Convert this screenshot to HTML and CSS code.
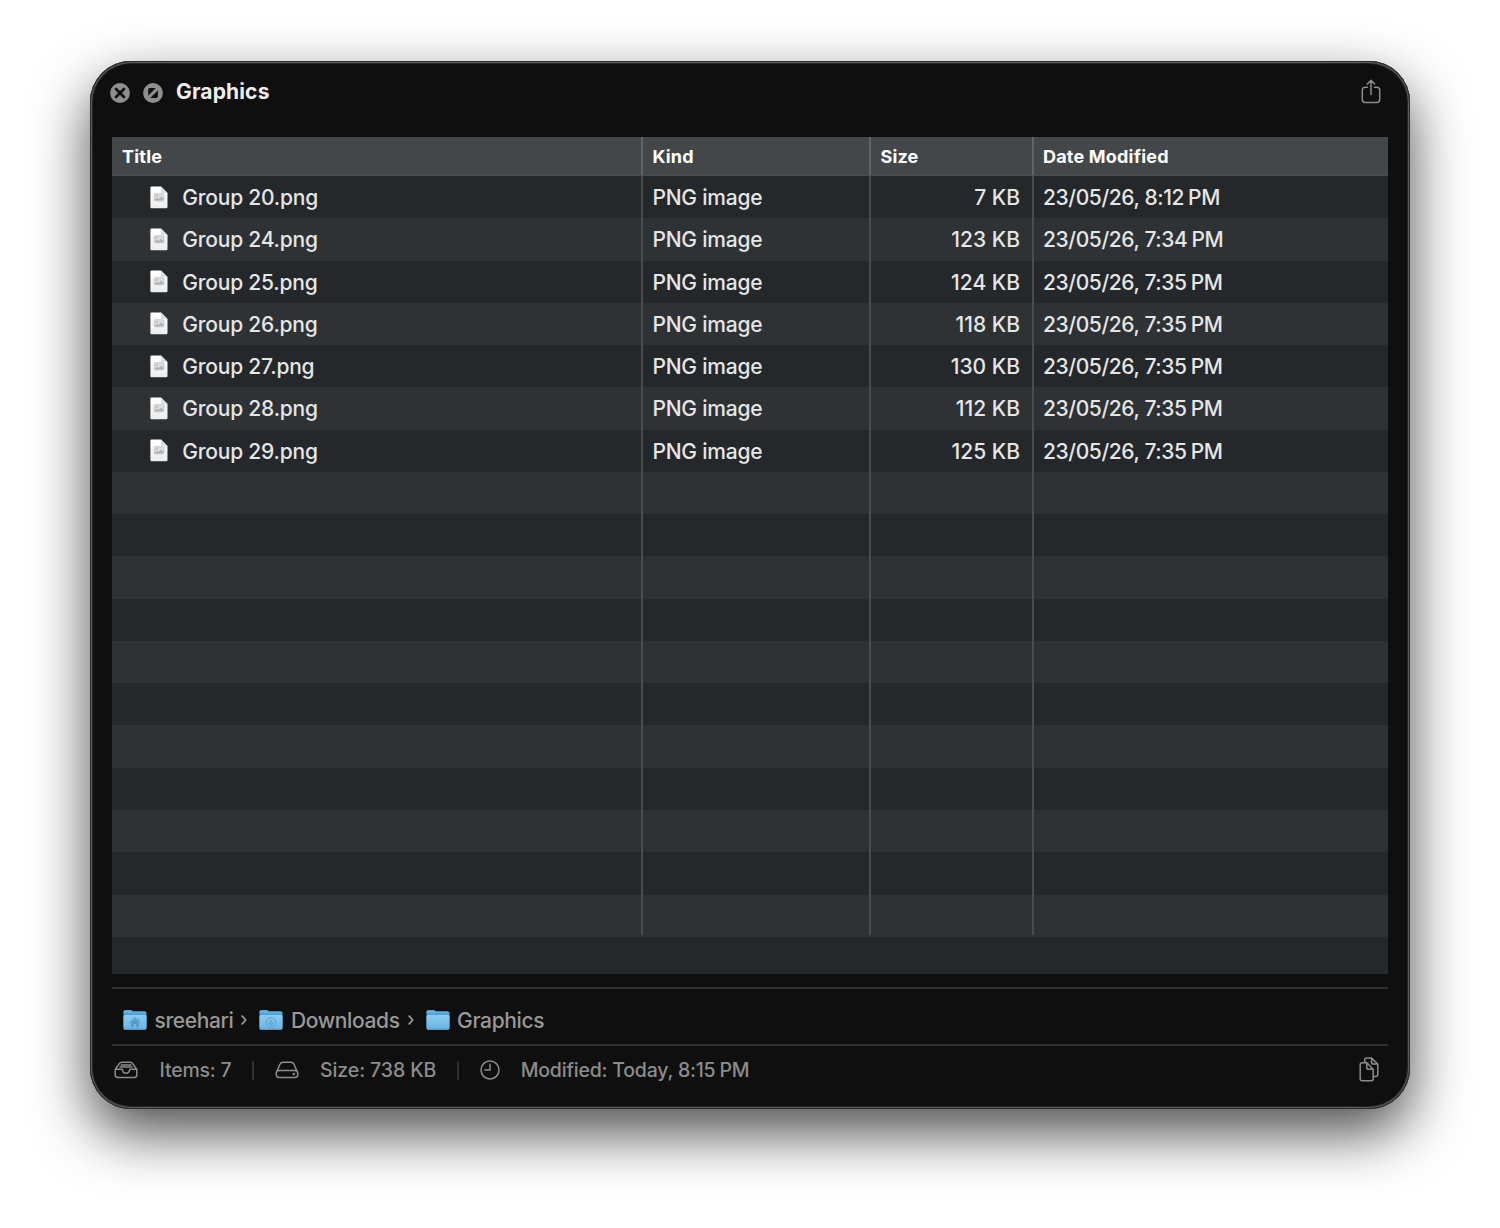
FILE: index.html
```html
<!DOCTYPE html>
<html lang="en">
<head>
<meta charset="utf-8">
<title>Graphics</title>
<link rel="stylesheet" href="styles.css">
</head>
<body>
<svg class="defs" width="0" height="0">
  <defs>
    <linearGradient id="folder-front" x1="0" y1="0" x2="0" y2="1"><stop offset="0" stop-color="#89cdf4"/><stop offset="1" stop-color="#69b2e3"/></linearGradient>
    <linearGradient id="paper" x1="0" y1="0" x2="0" y2="1"><stop offset="0" stop-color="#fff"/><stop offset="1" stop-color="#ececec"/></linearGradient>
    <symbol id="png" viewBox="0 0 18 23">
      <path d="M1.6 0.5H11l6.5 6.6v14q0 1.2-1.2 1.2H1.6Q.4 22.300.4 21.100V1.700Q.4.5 1.600.5z" fill="url(#paper)"/>
      <path d="M11 .5l6.500 6.600h-5q-1.500 0-1.500-1.500z" fill="#dcdcdc"/>
      <rect x="4.300" y="7.800" width="9.500" height="7" rx="1" fill="#dedede" stroke="#bbb" stroke-width=".8"/>
      <path d="M4.800 13.800l2.200-2 1.800 1.300 2.200-2.500 2.300 2.500v1.200H4.800z" fill="#b2b2b2"/>
      <circle cx="6.800" cy="10" r=".8" fill="#999"/>
    </symbol>
    <symbol id="folder" viewBox="0 0 24 20">
      <path d="M0.500 2Q.5.300 2.200.300h5.600q.8 0 1.500.6t1.500.6h11q1.700 0 1.700 1.700v14H.5z" fill="#4f9fd5"/>
      <path d="M.5 3.200V2Q.5.300 2.200.300h5.600q.8 0 1.500.6t1.500.6h11q1.700 0 1.700 1.700z" fill="#65b2e2"/>
      <rect x=".5" y="4.900" width="23" height="14.800" rx="1.500" fill="url(#folder-front)"/>
      <path d="M1.500 19.200h21" stroke="#559fd0" stroke-width=".8"/>
    </symbol>
  </defs>
</svg>
<main class="window">
  <header class="titlebar">
    <svg class="control" viewBox="0 0 20 20"><circle cx="10" cy="10" r="9.900" fill="#8f8f8f"/><path d="M6 6l8 8M14 6l-8 8" stroke="#101010" stroke-width="2.600" stroke-linecap="round"/></svg>
    <svg class="control second" viewBox="0 0 20 20"><circle cx="10" cy="10" r="9.900" fill="#8f8f8f"/><path d="M5.200 12.800V6.700q0-1.600 1.600-1.600h6zM14.900 7.200v6.100q0 1.600-1.600 1.600H7.200z" fill="#101010"/></svg>
    <h1>Graphics</h1>
    <svg class="share" viewBox="0 0 20 25"><path d="M6.500 8.200H4.300Q1.300 8.200 1.300 11.200v9.200q0 3 3 3h11.400q3 0 3-3v-9.200q0-3-3-3h-2.200M10 15.500V1.500M6.300 5L10 1.300 13.700 5"/></svg>
  </header>
  <section class="listing">
    <div class="row head"><div>Title</div><div>Kind</div><div>Size</div><div>Date Modified</div></div>
    <div class="row"><div class="name"><svg class="file"><use href="#png"/></svg>Group 20.png</div><div>PNG image</div><div class="size">7 KB</div><div class="date">23/05/26, 8:12<span class="ap">PM</span></div></div>
    <div class="row"><div class="name"><svg class="file"><use href="#png"/></svg>Group 24.png</div><div>PNG image</div><div class="size">123 KB</div><div class="date">23/05/26, 7:34<span class="ap">PM</span></div></div>
    <div class="row"><div class="name"><svg class="file"><use href="#png"/></svg>Group 25.png</div><div>PNG image</div><div class="size">124 KB</div><div class="date">23/05/26, 7:35<span class="ap">PM</span></div></div>
    <div class="row"><div class="name"><svg class="file"><use href="#png"/></svg>Group 26.png</div><div>PNG image</div><div class="size">118 KB</div><div class="date">23/05/26, 7:35<span class="ap">PM</span></div></div>
    <div class="row"><div class="name"><svg class="file"><use href="#png"/></svg>Group 27.png</div><div>PNG image</div><div class="size">130 KB</div><div class="date">23/05/26, 7:35<span class="ap">PM</span></div></div>
    <div class="row"><div class="name"><svg class="file"><use href="#png"/></svg>Group 28.png</div><div>PNG image</div><div class="size">112 KB</div><div class="date">23/05/26, 7:35<span class="ap">PM</span></div></div>
    <div class="row"><div class="name"><svg class="file"><use href="#png"/></svg>Group 29.png</div><div>PNG image</div><div class="size">125 KB</div><div class="date">23/05/26, 7:35<span class="ap">PM</span></div></div>
    <div class="row"><div></div><div></div><div></div><div></div></div>
    <div class="row"><div></div><div></div><div></div><div></div></div>
    <div class="row"><div></div><div></div><div></div><div></div></div>
    <div class="row"><div></div><div></div><div></div><div></div></div>
    <div class="row"><div></div><div></div><div></div><div></div></div>
    <div class="row"><div></div><div></div><div></div><div></div></div>
    <div class="row"><div></div><div></div><div></div><div></div></div>
    <div class="row"><div></div><div></div><div></div><div></div></div>
    <div class="row"><div></div><div></div><div></div><div></div></div>
    <div class="row"><div></div><div></div><div></div><div></div></div>
    <div class="row"><div></div><div></div><div></div><div></div></div>
  </section>
  <nav class="path">
    <svg class="folder" viewBox="0 0 24 20"><use href="#folder"/><path d="M6.700 12.800L12 8l5.300 4.800M15.500 10.500v-2" fill="none" stroke="#539cc9" stroke-width="1.100"/><path d="M8.200 12.500L12 9.200l3.800 3.300v4.800h-2.600v-3h-2.400v3H8.200z" fill="#539cc9"/></svg>
    <span class="crumb">sreehari</span>
    <svg class="chevron" viewBox="0 0 6 10"><path d="M1.200 1.200L4.700 5 1.200 8.800"/></svg>
    <svg class="folder" viewBox="0 0 24 20"><use href="#folder"/><path d="M12 9.700v5M10 12.900l2 2 2-2" fill="none" stroke="#539cc9"/><circle cx="12" cy="12.400" r="4.700" fill="none" stroke="#539cc9" stroke-width=".9"/></svg>
    <span class="crumb">Downloads</span>
    <svg class="chevron" viewBox="0 0 6 10"><path d="M1.200 1.200L4.700 5 1.200 8.800"/></svg>
    <svg class="folder" viewBox="0 0 24 20"><use href="#folder"/></svg>
    <span class="crumb">Graphics</span>
  </nav>
  <footer class="status">
    <svg class="glyph" viewBox="0 0 24 18"><path d="M1.200 8.500L5.300 2.600Q6.200 1.200 7.800 1.200h8.400q1.600 0 2.500 1.400l4.100 5.900v5.500q0 2.500-2.500 2.500H3.700q-2.500 0-2.500-2.500zM1.500 8.300h6.200q.8 0 .8.900Q8.800 12.200 12 12.200t3.500-3q0-.9.800-.9h6.200M7.200 3.900h9.600M6 6.100h12"/></svg>
    <span class="items">Items: 7</span><i class="sep"></i>
    <svg class="glyph" viewBox="0 0 24 18"><path d="M1.400 11.500L5 3.200Q5.900 1.200 7.900 1.200h8.200q2 0 2.900 2l3.600 8.300M4.200 9.500h15.600q3 0 3 3v1q0 3-3 3H4.200q-3 0-3-3v-1q0-3 3-3z"/><circle cx="18.800" cy="13" r="1.200" fill="#8c8c8c" stroke="none"/></svg>
    <span class="total">Size: 738 KB</span><i class="sep"></i>
    <svg class="clock" viewBox="0 0 20 20"><circle cx="10" cy="10" r="9"/><path d="M10 4.300V10H4.700"/></svg>
    <span class="modified">Modified: Today, 8:15<span class="ap">PM</span></span>
    <svg class="copy" viewBox="0 0 20 25"><path d="M5.700 5V3.300Q5.700 1.100 7.900 1.100h4.700l6.200 6.200v10.100q0 2-2 2h-1.700M12.600 1.100v4.100q0 1.900 1.900 1.900h4.200M3.200 5.800h4.600l6.400 6.400v9.500q0 2-2 2h-9q-2 0-2-2V7.800q0-2 2-2zM7.800 5.800v4.600q0 1.900 1.900 1.900h4.500"/></svg>
  </footer>
</main>
</body>
</html>
```
FILE: styles.css
```css
* { box-sizing: border-box; }
body {
  margin: 0; width: 1500px; height: 1228px; padding: 61px 90px; overflow: hidden;
  background: #fff; font: 450 21px/1 Inter, "Liberation Sans", sans-serif;
  font-variant-ligatures: none;
}
.defs { display: block; height: 0; }
svg { display: block; flex: none; }
.window {
  width: 1320px; height: 1048px; padding: 0 22px; border-radius: 41px;
  background: #0f0f0f; color: #e5e6e6; display: flex; flex-direction: column;
  box-shadow: inset 0 0 0 1px #2a2b2b, inset 0 0 0 2px #5b5d5d, inset 0 0 0 3px #242424,
    0 24px 57px rgba(0,0,0,.7);
}
.titlebar { height: 76px; padding: 18px 7px 0 0; display: flex; align-items: flex-start; }
.control { width: 20px; height: 20px; margin: 4px 0 0 -2px; }
.second { margin-left: 13px; }
h1 { margin: 0 auto 0 13px; font-size: 21px; line-height: 25px; font-weight: 700; letter-spacing: .15px; color: #eee; }
.share { width: 20px; height: 25px; }
.share, .glyph, .clock, .copy { fill: none; stroke: #8c8c8c; stroke-width: 1.500; stroke-linecap: round; stroke-linejoin: round; }
.listing { height: 837px; background: #24282b; }
.row { height: 42.280px; display: grid; grid-template-columns: 531px 228px 163px 354px; color: #e5e6e6; letter-spacing: -.21px; }
.row:nth-child(odd) { background: #2e3235; }
.row > div { display: flex; align-items: center; padding: 1px 0 0 9.400px; white-space: pre; border-right: 2px solid #4a4d50; }
.row > div:first-child { padding-left: 10px; }
.row > div:last-child { border: 0; padding-left: 9px; }
.row:last-child > div { margin-bottom: 2px; }
.row.head { height: 39px; background: #434749; font-size: 18px; font-weight: 700; letter-spacing: .2px; color: #fff; border-bottom: 1px solid #4b4f51; }
.row.head > div { border-color: #616466; padding-top: 1px; }
.row .name:first-child { padding-left: 38.300px; }
.file { width: 18px; height: 23px; margin: -1px 14px 0 0; }
.row .size { justify-content: flex-end; padding-right: 12px; letter-spacing: 0; }
.row .date { letter-spacing: -.4px; }
.ap { margin-left: 4px; }
.path { height: 59px; margin-top: 13px; padding: 7px 0 0 11px; border: solid #303030; border-width: 2px 0; display: flex; align-items: center; color: #999; letter-spacing: -.37px; }
.folder { width: 24px; height: 20px; margin-right: 7.500px; }
.chevron { width: 6px; height: 10px; margin: 0 12px 0 8px; fill: none; stroke: #999; stroke-width: 1.800; stroke-linecap: round; stroke-linejoin: round; }
.status { height: 48px; padding: 0 9px 0 2px; display: flex; align-items: center; color: #8c8c8c; font-size: 19.500px; letter-spacing: -.2px; }
.status > span { padding-top: 1px; }
.glyph { width: 24px; height: 18px; }
.items { margin-left: 21.500px; }
.sep { width: 2px; height: 19px; margin: 0 21px 0 20.500px; background: #303030; }
.total { margin-left: 21px; letter-spacing: -.1px; }
.clock { width: 20px; height: 20px; }
.modified { margin-left: 21px; }
.copy { width: 20px; height: 25px; margin: -1px 0 0 auto; }
```
